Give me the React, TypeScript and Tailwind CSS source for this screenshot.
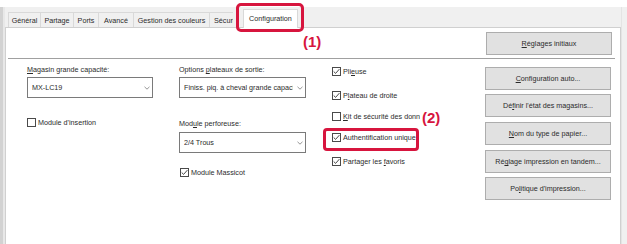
import React from "react";

function Box({ checked }: { checked: boolean }) {
  return (
    <svg width="9" height="9" viewBox="0 0 9 9" className="shrink-0">
      <rect x="0.5" y="0.5" width="8" height="8" fill="white" stroke="#4a4a4a" />
      {checked && (
        <path d="M1.7 4.5 L3.6 6.4 L7.4 2.1" fill="none" stroke="#333" strokeWidth="0.9" />
      )}
    </svg>
  );
}

function Check({ checked, children, className = "" }: { checked: boolean; children: React.ReactNode; className?: string }) {
  return (
    <div className={`flex items-center h-[9px] ${className}`}>
      <Box checked={checked} />
      <span className="ml-[2px] whitespace-nowrap leading-[9px]">{children}</span>
    </div>
  );
}

function Chevron() {
  return (
    <svg width="6" height="4" viewBox="0 0 6 4" className="shrink-0">
      <path d="M0.5 0.8 L3 3.2 L5.5 0.8" fill="none" stroke="#7a7a7a" strokeWidth="0.8" />
    </svg>
  );
}

function Select({ value }: { value: string }) {
  return (
    <div className="h-[21px] border border-[#7a7a7a] bg-white flex items-center pl-[4px] pr-[2px]">
      <span className="flex-1 overflow-hidden whitespace-nowrap leading-[9px]">{value}</span>
      <span className="w-[4px]" />
      <Chevron />
    </div>
  );
}

function Btn({ children, className = "" }: { children: React.ReactNode; className?: string }) {
  return (
    <div className={`h-[23px] w-[126px] bg-[#e1e1e1] border border-[#adadad] flex items-center justify-center whitespace-nowrap ${className}`}>
      {children}
    </div>
  );
}

function Tab({ label, w, last }: { label: string; w: string; last?: boolean }) {
  return (
    <div
      className={`h-[15px] ${w} border-t border-l border-[#d9d9d9] bg-[#f0f0f0] flex items-center whitespace-nowrap overflow-hidden ${last ? "justify-start pl-[4px]" : "justify-center"}`}
    >
      {label}
    </div>
  );
}

export default function App() {
  return (
    <div className="w-[627px] h-[244px] bg-white flex flex-col overflow-hidden relative font-['Liberation_Sans',Arial,sans-serif] text-[7.2px] leading-[9px] text-[#2b2b2b]">
      <div className="h-[7px] shrink-0 bg-white" />
      <div className="flex flex-1">
        {/* left gutter */}
        <div className="flex shrink-0">
          <div className="w-[3px] bg-[#d2d2d2]" />
          <div className="w-[2px] bg-[#e8e8e8]" />
        </div>
        <div className="flex-1 flex flex-col">
          {/* tab strip */}
          <div className="h-[20px] bg-[#f0f0f0] flex items-end pl-[3px] shrink-0">
            <Tab label="Général" w="w-[32px]" />
            <Tab label="Partage" w="w-[33px]" />
            <Tab label="Ports" w="w-[25px]" />
            <Tab label="Avancé" w="w-[35px]" />
            <Tab label="Gestion des couleurs" w="w-[76px]" />
            <Tab label="Sécurité" w="w-[24px]" last />
            <div className="ml-[10px] h-[19px] w-[55px] bg-white border-t border-l border-r border-[#d9d9d9] mb-[-1px] relative z-10 flex items-center justify-center pb-[2px]">
              Configuration
            </div>
          </div>
          {/* panel */}
          <div className="flex-1 bg-white border-l border-t border-r border-[#d0d0d0] flex flex-col">
            <div className="flex justify-end pt-[4px] pr-[8px]">
              <Btn>
                <span><span className="underline">R</span>églages initiaux</span>
              </Btn>
            </div>
            <div className="mt-[3px] ml-[2px] mr-[5px] h-[1px] bg-[#a0a0a0]" />
            <div className="flex pl-[21px]">
              {/* col 1 */}
              <div className="w-[126px] flex flex-col">
                <div className="mt-[6px] whitespace-nowrap"><span className="underline">M</span>agasin grande capacité:</div>
                <div className="mt-[3px]"><Select value="MX-LC19" /></div>
                <Check checked={false} className="mt-[20px]">Module d'insertion</Check>
              </div>
              {/* col 2 */}
              <div className="w-[127px] ml-[26px] flex flex-col">
                <div className="mt-[6px] whitespace-nowrap">Options <span className="underline">p</span>lateaux de sortie:</div>
                <div className="mt-[3px]"><Select value="Finiss. piq. à cheval grande capacité" /></div>
                <div className="mt-[21px] whitespace-nowrap">Mod<span className="underline">u</span>le perforeuse:</div>
                <div className="mt-[4px]"><Select value="2/4 Trous" /></div>
                <Check checked className="mt-[15px] pl-[1px]">Module Massicot</Check>
              </div>
              {/* col 3 */}
              <div className="w-[154px] ml-[25px] flex flex-col pl-[1px] pt-[8px]">
                <Check checked>Pli<span className="underline">e</span>use</Check>
                <Check checked className="mt-[15px]">P<span className="underline">l</span>ateau de droite</Check>
                <div className="mt-[12px] flex items-center h-[9px]">
                  <Box checked={false} />
                  <span className="ml-[2px] whitespace-nowrap overflow-hidden w-[77px]"><span className="underline">K</span>it de sécurité des données</span>
                </div>
                <Check checked className="mt-[12px]">Authentification unique</Check>
                <Check checked className="mt-[15px]">Partager les <span className="underline">f</span>avoris</Check>
              </div>
              {/* col 4 */}
              <div className="flex flex-col pt-[8px]">
                <Btn><span><span className="underline">C</span>onfiguration auto...</span></Btn>
                <Btn className="mt-[4px]"><span>Dé<span className="underline">f</span>inir l'état des magasins...</span></Btn>
                <Btn className="mt-[5px]"><span><span className="underline">N</span>om du type de papier...</span></Btn>
                <Btn className="mt-[5px]"><span>Ré<span className="underline">g</span>lage impression en tandem...</span></Btn>
                <Btn className="mt-[4px]"><span>Po<span className="underline">l</span>itique d'impression...</span></Btn>
              </div>
            </div>
          </div>
        </div>
        {/* right gutter */}
        <div className="w-[6px] shrink-0 bg-[#f0f0f0] border-l border-[#e4e4e4]" />
      </div>

      {/* annotations */}
      <div className="absolute left-[236px] top-[3px] w-[68px] h-[29px] border-[3px] border-[#d7153e] rounded-[5px]" />
      <div className="absolute left-[303px] top-[34px] text-[15px] leading-[15px] font-bold text-[#d7153e]">(1)</div>
      <div className="absolute left-[323px] top-[128px] w-[96px] h-[23px] border-[3px] border-[#d7153e] rounded-[4px]" />
      <div className="absolute left-[422px] top-[110px] text-[15px] leading-[15px] font-bold text-[#d7153e]">(2)</div>
    </div>
  );
}
